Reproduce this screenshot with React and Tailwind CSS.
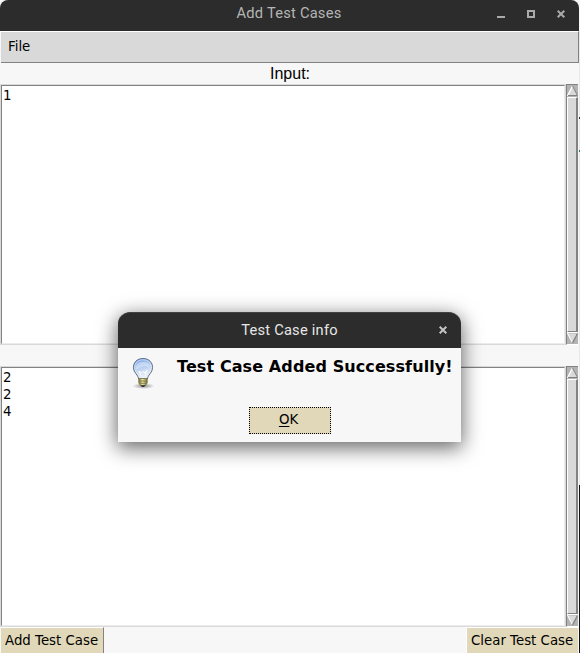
import React from "react";

function ScrollBar() {
  return (
    <div className="w-[12px] shrink-0 flex flex-col bg-[#b3b3b3] border-l border-[#828282] border-t border-b border-b-white">
      <Arrow />
      <div className="flex-1 bg-[#d9d9d9] border-t border-l border-white border-r-2 border-r-[#828282] border-b border-b-[#828282]" />
      <Arrow down />
    </div>
  );
}

function Arrow({ down = false }) {
  return (
    <svg className="w-[11px] h-[12px] shrink-0 block" viewBox="0 0 11 12" fill="none">
      {down ? (
        <>
          <path d="M0 1.5H11L5.5 11Z" fill="#d9d9d9" />
          <path d="M0 .5H11M.5 1L5.5 11" stroke="#fff" />
          <path d="M10.5 1.5L5.5 11" stroke="#828282" strokeWidth="1.3" />
        </>
      ) : (
        <>
          <path d="M5.5 1L11 11H0Z" fill="#d9d9d9" />
          <path d="M5.5 1L.5 11" stroke="#fff" strokeWidth="1.3" />
          <path d="M5.5 1L10.5 10.5H1" stroke="#828282" />
        </>
      )}
    </svg>
  );
}

function TextPane({ lines }) {
  return (
    <div className="h-[261px] shrink-0 flex w-[578px]">
      <div className="flex-1 border border-[#d9d9d9]">
        <div className="h-full bg-white border-t border-l border-[#828282] border-b border-b-[#ececec] border-r border-r-[#ececec] pl-px pt-px leading-[17px]">
          {lines.map((line, i) => (
            <div key={i}>{line}</div>
          ))}
        </div>
      </div>
      <ScrollBar />
    </div>
  );
}

function Close({ className }) {
  return (
    <svg className={className} viewBox="0 0 8 8" width="8" height="8" fill="none" stroke="currentColor" strokeWidth="2">
      <path d="M.7.7L7.3 7.3M7.3.7L.7 7.3" />
    </svg>
  );
}

function Bulb() {
  return (
    <svg className="w-[32px] h-[32px] shrink-0" viewBox="0 0 32 32">
      <defs>
        <linearGradient id="glass" x1="0" y1="0" x2="0.3" y2="1">
          <stop offset="0" stopColor="#6f9ce0" />
          <stop offset=".5" stopColor="#b4cdf0" />
          <stop offset="1" stopColor="#f0f3f7" />
        </linearGradient>
        <radialGradient id="ground">
          <stop offset="0" stopColor="#555" stopOpacity=".65" />
          <stop offset="1" stopColor="#555" stopOpacity="0" />
        </radialGradient>
        <linearGradient id="brass">
          <stop offset="0" stopColor="#77733e" />
          <stop offset=".45" stopColor="#e8e3a0" />
          <stop offset="1" stopColor="#747043" />
        </linearGradient>
      </defs>
      <ellipse cx="16.5" cy="29" rx="11" ry="3" fill="url(#ground)" />
      <path d="M16 1.5C10 1.5 6.4 5.5 6.4 10.6C6.4 16 11.4 17.8 11.7 22H20.3C20.6 17.8 25.6 16 25.6 10.6C25.6 5.5 22 1.5 16 1.5Z" fill="url(#glass)" stroke="#65708a" />
      <path d="M16 2.8C10.5 2.8 7.7 6.4 7.7 10.6C7.7 15.2 12.3 17 12.8 21H19.2C19.7 17 24.3 15.2 24.3 10.6C24.3 6.4 21.5 2.8 16 2.8Z" fill="none" stroke="#e2edff" strokeOpacity=".6" />
      <path d="M9 11C9 6 12 5 16 5C20 5 22.7 7 22.7 10C19 8 14 9 9 13Z" fill="#f4f8ff" fillOpacity=".4" />
      <path d="M14 19L12 14L14.5 16L16 14.5L18 16L20 13L18 19" fill="none" stroke="#fff" strokeWidth="1" />
      <path d="M11.8 21.5H20.2V26L18.5 28.5H13.5L11.8 26Z" fill="url(#brass)" stroke="#77743f" strokeWidth=".8" />
      <path d="M12 24H20M12.5 26.3H19.5" stroke="#77743f" strokeWidth=".8" />
      <path d="M13.5 28.3H18.5L17 30H15Z" fill="#333" />
    </svg>
  );
}

function Dialog() {
  return (
    <div className="absolute left-[118px] top-[312px] w-[343px] h-[130px] flex flex-col rounded-t-[12px] bg-[#f7f7f7] shadow-[0_5px_20px_1px_rgba(0,0,0,0.6)]">
      <div className="h-[36px] shrink-0 bg-[#2c2c2c] rounded-t-[12px] border-t border-[#414141] grid grid-cols-[1fr_auto_1fr] items-center font-[Roboto,sans-serif] text-[14.67px] tracking-[0.23px] text-[#e6e6e6]">
        <span />
        <span className="pb-[2px]">Test Case info</span>
        <Close className="justify-self-end mr-[14px] mb-px text-[#c4c4c4]" />
      </div>
      <div className="flex pl-[9px] pt-[9px]">
        <Bulb />
        <div className="ml-[18px] text-[16px] leading-[19px] tracking-[0.1px] font-bold whitespace-nowrap text-black">Test Case Added Successfully!</div>
      </div>
      <button className="ml-[131px] mt-[18px] w-[82px] h-[27px] bg-[#e0d8b8] border border-dotted border-black pb-[2px] pr-[3px] leading-[20px]">
        <span className="underline underline-offset-[2px]">O</span>K
      </button>
    </div>
  );
}

export default function App() {
  return (
    <div className="relative w-[580px] h-[653px] overflow-hidden bg-[#f7f7f7] flex flex-col text-[13.33px] text-black font-['DejaVu_Sans',sans-serif]">
      <div className="h-[31px] shrink-0 w-[579px] rounded-t-[8px] bg-[#2c2c2c] flex items-center text-[#b5b5b5] font-[Roboto,sans-serif] text-[14.67px]">
        <div className="flex-1" />
        <div className="pb-[6px] pl-[13px] tracking-[0.23px]">Add Test Cases</div>
        <div className="flex-1 flex justify-end items-center gap-[22px] pr-[14px] pb-[4px]">
          <div className="w-[8px] h-[8px] border-b-2 border-[#aaa]" />
          <div className="w-[8px] h-[8px] border-2 border-[#aaa]" />
          <Close className="text-[#aaa]" />
        </div>
      </div>
      <div className="h-[32px] shrink-0 ml-px w-[578px] bg-[#d9d9d9] border-t border-t-white border-b border-b-[#828282] border-r border-r-[#828282] pl-[7px] pt-[5px] leading-[20px]">File</div>
      <div className="h-[21px] shrink-0 text-center font-['Liberation_Sans',sans-serif] text-[16px] leading-[21px]">Input:</div>
      <TextPane lines={["1"]} />
      <div className="h-[21px] shrink-0" />
      <TextPane lines={["2", "2", "4"]} />
      <div className="h-[26px] shrink-0 flex justify-between w-[578px] pl-px whitespace-nowrap">
        <button className="w-[103px] bg-[#e0d8b8] border-t border-t-white border-r border-r-[#828282] text-left pl-[4px] leading-[20px]">Add Test Case</button>
        <button className="w-[112px] bg-[#e0d8b8] border-t border-l border-white text-left pl-[4px] leading-[20px]">Clear Test Case</button>
      </div>
      <div className="absolute right-0 top-[31px] w-px h-[454px] bg-[#e8e8e8]" />
      <div className="absolute right-0 top-[485px] w-px h-[168px] bg-[#111]" />
      <div className="absolute right-0 top-[117px] w-px h-[2px] bg-[#333]" />
      <div className="absolute right-0 top-[150px] w-px h-[2px] bg-[#158447]" />
      <Dialog />
    </div>
  );
}
